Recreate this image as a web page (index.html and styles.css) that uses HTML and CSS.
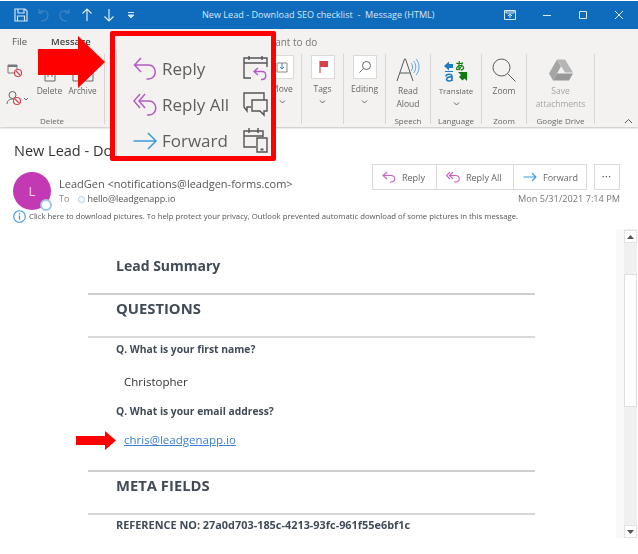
FILE: index.html
```html
<!DOCTYPE html>
<html lang="en">
<head>
<meta charset="utf-8">
<title>New Lead - Download SEO checklist - Message (HTML)</title>
<link rel="stylesheet" href="styles.css">
</head>
<body>
<div class="shot">
  <header class="titlebar">
    <div class="qat">
      <svg class="qi" width="14" height="14" viewBox="0 0 14 14"><path d="M1 1h10l2 2v10H1zM4 1v4h6V1M3.500 13V8h7v5" fill="none" stroke="#cfe3f5" stroke-width="1.200"/></svg>
      <svg class="qi" width="14" height="14" viewBox="0 0 14 14"><path d="M3 1v4h4M3 5c2-3 9-3 9 2s-4 6-7 6" fill="none" stroke="#3f86c8" stroke-width="1.200"/></svg>
      <svg class="qi" width="14" height="14" viewBox="0 0 14 14"><path d="M11 1v4H7M11 5C9 2 2 2 2 7s4 6 7 6" fill="none" stroke="#3f86c8" stroke-width="1.200"/></svg>
      <svg class="qi" width="14" height="14" viewBox="0 0 14 14"><path d="M7 13V1M2.500 5.500L7 1l4.500 4.500" fill="none" stroke="#dbe9f6" stroke-width="1.200"/></svg>
      <svg class="qi" width="14" height="14" viewBox="0 0 14 14"><path d="M7 1v12M2.500 8.500L7 13l4.500-4.500" fill="none" stroke="#dbe9f6" stroke-width="1.200"/></svg>
      <svg class="qi" width="14" height="14" viewBox="0 0 14 14"><path d="M4 4.500h6M4 7l3 3 3-3z" fill="#cfe3f5" stroke="#cfe3f5"/></svg>
    </div>
    <div class="wintitle">New Lead - Download SEO checklist  -  Message (HTML)</div>
    <div class="winctl">
      <svg width="12" height="10" viewBox="0 0 12 10"><path d="M.5.500h11v9H.5z" fill="none" stroke="#dbe9f6"/><path d="M2 1h8v2H2zM6 8V4M4 6l2-2 2 2" fill="none" stroke="#dbe9f6"/></svg>
      <svg width="10" height="10" viewBox="0 0 10 10"><path d="M1 5.500h8" stroke="#dbe9f6"/></svg>
      <svg width="10" height="10" viewBox="0 0 10 10"><path d="M1.500 1.500h7v7h-7z" fill="none" stroke="#dbe9f6"/></svg>
      <svg width="10" height="10" viewBox="0 0 10 10"><path d="M1 1l8 8M9 1L1 9" stroke="#dbe9f6"/></svg>
    </div>
  </header>

  <section class="ribbon">
    <nav class="tabs">
      <span class="tab tab-file">File</span>
      <span class="tab tab-msg">Message</span>
      <span class="tab tab-tell">Tell me what you want to do</span>
    </nav>
    <div class="groups">
      <div class="group g-delete">
        <div class="g-body">
          <div class="mini">
            <svg width="20" height="16" viewBox="0 0 20 16"><path d="M2 3h9v8H2z" fill="none" stroke="#777"/><path d="M2 3h9v2H2z" fill="#777"/><circle cx="12" cy="11" r="3.500" fill="#fff" stroke="#d8414c" stroke-width="1.200"/><path d="M10 9l4 4" stroke="#d8414c" stroke-width="1.200"/></svg>
            <svg width="24" height="16" viewBox="0 0 24 16"><circle cx="6.500" cy="5" r="3.500" fill="none" stroke="#666"/><path d="M1 14c0-3 2-5 6-5" fill="none" stroke="#666"/><circle cx="11" cy="11" r="3.500" fill="#fff" stroke="#d8414c" stroke-width="1.200"/><path d="M9 9l4 4" stroke="#d8414c" stroke-width="1.200"/><path d="M18 8l2 2 2-2" fill="none" stroke="#666"/></svg>
          </div>
          <div class="stack s-del">
            <svg width="16" height="22" viewBox="0 0 16 22"><path d="M1 4h14M3 4v17h10V4M6 9v8M10 9v8" fill="none" stroke="#666"/></svg>
            <span class="btn-sm">Delete</span>
          </div>
          <div class="stack s-arc">
            <svg width="22" height="22" viewBox="0 0 22 22"><path d="M1 4h20v17H1z" fill="none" stroke="#666"/></svg>
            <span class="btn-sm">Archive</span>
          </div>
        </div>
        <div class="g-label">Delete</div>
      </div>
      <div class="group g-hidden"></div>
      <div class="group g-move">
        <div class="g-body col">
          <span class="boxed"><svg width="12" height="12" viewBox="0 0 12 12"><path d="M1 2h10v9H1z" fill="none" stroke="#888"/><path d="M6 2v6M4 6l2 2 2-2" fill="none" stroke="#2f86d1"/></svg></span>
          <span class="btn-sm">Move</span>
          <svg class="caret" width="7" height="4" viewBox="0 0 7 4"><path d="M1 .500l2.500 2.500L6 .500" fill="none" stroke="#666"/></svg>
        </div>
        <div class="g-label"></div>
      </div>
      <div class="group g-tags">
        <div class="g-body col">
          <span class="boxed"><svg width="12" height="14" viewBox="0 0 12 14"><path d="M3 1v12" stroke="#b33"/><path d="M3 1h8v6H3z" fill="#d8414c"/></svg></span>
          <span class="btn-sm">Tags</span>
          <svg class="caret" width="7" height="4" viewBox="0 0 7 4"><path d="M1 .500l2.500 2.500L6 .500" fill="none" stroke="#666"/></svg>
        </div>
        <div class="g-label"></div>
      </div>
      <div class="group g-edit">
        <div class="g-body col">
          <span class="boxed"><svg width="14" height="14" viewBox="0 0 14 14"><circle cx="8.500" cy="5.500" r="4" fill="none" stroke="#666"/><path d="M5.500 8.500L1.500 12.500" stroke="#666"/></svg></span>
          <span class="btn-sm">Editing</span>
          <svg class="caret" width="7" height="4" viewBox="0 0 7 4"><path d="M1 .500l2.500 2.500L6 .500" fill="none" stroke="#666"/></svg>
        </div>
        <div class="g-label"></div>
      </div>
      <div class="group g-speech">
        <div class="g-body col tall">
          <svg width="24" height="24" viewBox="0 0 24 24"><path d="M1 23L8.500 1h1L17 23M4 15h10" fill="none" stroke="#5a5a5a"/><path d="M15 5c2 2 2 6 0 8M17.500 3c3 3 3 9 0 12M20 1c4 4 4 12 0 16" fill="none" stroke="#5aa7e0"/></svg>
          <span class="btn-sm">Read<br>Aloud</span>
        </div>
        <div class="g-label">Speech</div>
      </div>
      <div class="group g-lang">
        <div class="g-body col tall">
          <svg width="24" height="24" viewBox="0 0 24 24"><path d="M0 8l5-4.500V6h4v4H5v2.500z" fill="#1f7ac4"/><text x="11" y="12" class="jp">あ</text><path d="M1 13.500h8" stroke="#1f7ac4"/><path d="M8 23v-4.500c0-3-6-3-6 0M8 19c-6-1-7 4-3 4 2 0 3-1 3-2" fill="none" stroke="#1f7ac4" stroke-width="1.600"/><path d="M14 14h9v9l-2.500-2.500-2 2-3.500-3.500 2-2z" fill="#107c10"/></svg>
          <span class="btn-sm t-lang">Translate</span>
          <svg class="caret" width="7" height="4" viewBox="0 0 7 4"><path d="M1 .500l2.500 2.500L6 .500" fill="none" stroke="#666"/></svg>
        </div>
        <div class="g-label">Language</div>
      </div>
      <div class="group g-zoom">
        <div class="g-body col tall">
          <svg width="24" height="24" viewBox="0 0 24 24"><circle cx="9.500" cy="9.500" r="8.500" fill="none" stroke="#5a5a5a"/><path d="M15.500 15.500L23.500 23.500" stroke="#5a5a5a"/></svg>
          <span class="btn-sm">Zoom</span>
        </div>
        <div class="g-label">Zoom</div>
      </div>
      <div class="group g-drive">
        <div class="g-body col tall">
          <svg width="24" height="24" viewBox="0 0 24 21"><path d="M8 0h8l8 13h-8z" fill="#b5b5b5"/><path d="M8 0l4 7-8 14-4-7z" fill="#a5a5a5"/><path d="M8 14h16l-4 7H4z" fill="#989898"/></svg>
          <span class="btn-sm faint">Save<br>attachments</span>
        </div>
        <div class="g-label">Google Drive</div>
      </div>
      <div class="g-end">
        <svg width="9" height="6" viewBox="0 0 9 6"><path d="M1 5l3.500-3.500L8 5" fill="none" stroke="#555"/></svg>
      </div>
    </div>
  </section>

  <section class="msghead">
    <h1 class="subject">New Lead - Download SEO checklist</h1>
    <div class="sender-row">
      <div class="avatar">L<span class="presence"></span></div>
      <div class="who">
        <div class="from">LeadGen &lt;notifications@leadgen-forms.com&gt;</div>
        <div class="to"><span class="to-l">To</span><span class="dot"></span>hello@leadgenapp.io</div>
      </div>
      <div class="actions">
        <div class="btns">
          <div class="btngroup">
            <span class="abtn a-reply"><svg width="14" height="12" viewBox="0 0 14 12"><path d="M5 1L1 4.500 5 8M1 4.500h8c5 0 5 6.500 0 6.500H8" fill="none" stroke="#c75fc8" stroke-width="1.100"/></svg>Reply</span>
            <span class="abtn a-all"><svg width="14" height="12" viewBox="0 0 14 12"><path d="M4 1L.500 4.500 4 8M7 1L3.500 4.500 7 8M3.500 4.500h6c5 0 5 6.500 0 6.500H8" fill="none" stroke="#c75fc8" stroke-width="1.100"/></svg>Reply All</span>
            <span class="abtn a-fwd"><svg width="14" height="10" viewBox="0 0 14 10"><path d="M.5 5h12M9 1l4 4-4 4" fill="none" stroke="#3a9ad9" stroke-width="1.100"/></svg>Forward</span>
          </div>
          <span class="more">•••</span>
        </div>
        <div class="date">Mon 5/31/2021 7:14 PM</div>
      </div>
    </div>
    <div class="infobar">
      <svg width="13" height="13" viewBox="0 0 13 13"><circle cx="6.500" cy="6.500" r="5.800" fill="#fff" stroke="#3a9ad9" stroke-width="1.100"/><path d="M6.500 5.500v4M6.500 3v1.400" stroke="#3a9ad9" stroke-width="1.300"/></svg>
      <span>Click here to download pictures. To help protect your privacy, Outlook prevented automatic download of some pictures in this message.</span>
    </div>
  </section>

  <section class="viewer">
    <div class="mail">
      <h2 class="lead">Lead Summary</h2>
      <h2 class="sect s-q">QUESTIONS</h2>
      <p class="q q1">Q. What is your first name?</p>
      <p class="a a1">Christopher</p>
      <p class="q q2">Q. What is your email address?</p>
      <p class="a a2"><a href="#">chris@leadgenapp.io</a></p>
      <h2 class="sect s-m">META FIELDS</h2>
      <p class="q ref">REFERENCE NO: 27a0d703-185c-4213-93fc-961f55e6bf1c</p>
    </div>
    <div class="scroll">
      <span class="sbtn"><svg width="7" height="4" viewBox="0 0 7 4"><path d="M0 4l3.500-4L7 4z" fill="#555"/></svg></span>
      <span class="thumb"></span>
      <span class="sbtn sdown"><svg width="7" height="4" viewBox="0 0 7 4"><path d="M0 0l3.500 4L7 0z" fill="#555"/></svg></span>
    </div>
  </section>

  <div class="callout">
    <div class="callout-rows">
      <div class="c-row"><svg width="26" height="24" viewBox="0 0 26 24"><path d="M8 1L1.500 8 8 15M1.500 8h14c9 0 9 14 0 14h-2" fill="none" stroke="#b45cc4" stroke-width="1.500"/></svg><span class="c-text">Reply</span></div>
      <div class="c-row"><svg width="26" height="24" viewBox="0 0 26 24"><path d="M7 1L1 8l6 7M12 1L6 8l6 7M6 8h10c9 0 9 14 0 14h-2" fill="none" stroke="#b45cc4" stroke-width="1.500"/></svg><span class="c-text">Reply All</span></div>
      <div class="c-row"><svg width="26" height="18" viewBox="0 0 26 18"><path d="M.5 9h22M15 1l8 8-8 8" fill="none" stroke="#3a9ad9" stroke-width="1.500"/></svg><span class="c-text">Forward</span></div>
    </div>
    <div class="callout-icons">
      <svg width="25" height="25" viewBox="0 0 25 25"><path d="M8 22H1V2h23v9M1 7h23M6 0v4M19 0v4" fill="none" stroke="#555" stroke-width="1.400"/><path d="M15 12l-4 3.500 4 3.500M11 15.500h8c5 0 5 8 0 8h-1" fill="none" stroke="#b45cc4" stroke-width="1.400"/></svg>
      <svg width="25" height="25" viewBox="0 0 25 25"><path d="M8 15H4v4l-3-4V1h20v7" fill="none" stroke="#555" stroke-width="1.400"/><path d="M9 8h15v11h-3v4l-4-4H9z" fill="#f3f2f1" stroke="#555" stroke-width="1.400"/></svg>
      <svg width="25" height="25" viewBox="0 0 25 25"><path d="M13 19H1V3h19v6M1 8h19M6 0v5M15 0v5" fill="none" stroke="#555" stroke-width="1.400"/><path d="M14 10h10v14H14z" fill="#f3f2f1" stroke="#555" stroke-width="1.400"/><path d="M17.500 20.500h3v2h-3z" fill="#555"/></svg>
    </div>
  </div>

  <svg class="arrow-big" width="67" height="52" viewBox="0 0 67 52"><path d="M0 13h40V0l27 26-27 26V39H0z" fill="#fe0000"/></svg>
  <svg class="arrow-small" width="40" height="19" viewBox="0 0 40 19"><path d="M0 5h29V0l11 9.500L29 19v-5H0z" fill="#fe0000"/></svg>
</div>
</body>
</html>
```
FILE: styles.css
```css
* { box-sizing: border-box; margin: 0; padding: 0; }
html, body { width: 638px; height: 554px; overflow: hidden; background: #fff; }
body { font-family: "Open Sans", "Noto Sans", sans-serif; color: #444; }
.shot { position: relative; width: 638px; height: 554px; padding-top: 1px; filter: blur(0.45px); }

.titlebar { height: 28px; background: #0f6cbd; display: flex; align-items: center; position: relative; }
.qat { display: flex; align-items: center; gap: 8px; padding-left: 14px; }
.wintitle { position: absolute; left: 202px; top: 8px; font-size: 9.1px; line-height: 12px; color: #d6e6f5; white-space: pre; }
.winctl { margin-left: auto; display: flex; align-items: center; gap: 26px; padding-right: 14px; }

.ribbon { height: 98px; background: #f3f2f1; box-shadow: 0 1px 2px rgba(0,0,0,.25); position: relative; }
.tabs { display: flex; height: 25px; align-items: center; font-size: 9.5px; color: #555; padding-left: 12px; }
.tab-msg { margin-left: 24px; font-weight: 600; color: #444; }
.tab-tell { margin-left: 95px; color: #777; font-size: 10px; }

.groups { display: flex; height: 70px; }
.group { display: flex; flex-direction: column; border-right: 1px solid #d8d6d4; flex: none; }
.g-body { flex: 1; position: relative; display: flex; font-size: 8.5px; color: #666; }
.g-body.col { flex-direction: column; align-items: center; padding-top: 1px; }
.g-body.tall { padding-top: 4px; }
.g-label { height: 9px; font-size: 8px; line-height: 12px; color: #666; text-align: center; white-space: nowrap; }
.g-delete { width: 105px; }
.g-hidden { width: 166px; }
.g-move { width: 31px; padding-right: 8px; border-right-width: 1px; }
.g-tags { width: 42px; }
.g-edit { width: 42px; }
.g-speech { width: 45px; }
.g-lang { width: 51px; }
.g-zoom { width: 45px; }
.g-drive { width: 68px; }
.g-end { flex: 1; display: flex; align-items: flex-end; justify-content: flex-end; padding: 0 5px 0 0; }

.mini { display: flex; flex-direction: column; gap: 12px; padding: 8px 0 0 6px; width: 36px; flex: none; }
.stack { display: flex; flex-direction: column; align-items: center; padding-top: 6px; flex: none; }
.stack svg { margin-bottom: 2px; }
.s-del { width: 27px; }
.s-arc { width: 33px; margin-left: 3px; }
.s-arc .btn-sm { font-size: 8.2px; }
.btn-sm { display: block; text-align: center; line-height: 13px; white-space: nowrap; }
.boxed { width: 24px; height: 24px; background: #fff; border: 1px solid #dcdad8; display: flex; align-items: center; justify-content: center; margin-bottom: 3px; flex: none; }
.faint { color: #a6a6a6; }
.caret { margin-top: 5px; }
.tall .btn-sm { margin-top: 2px; }
.t-lang { font-size: 8px; }
.jp { font-family: "Noto Sans CJK JP", sans-serif; font-size: 10px; fill: #107c10; font-weight: 700; }

.msghead { height: 102px; padding: 14px 18px 0 13px; position: relative; }
.subject { font-size: 14.5px; font-weight: 400; line-height: 20px; color: #333; padding-left: 1px; white-space: nowrap; }
.sender-row { display: flex; margin-top: 3px; }
.avatar { width: 38px; height: 38px; margin-top: 8px; border-radius: 50%; background: #c239b3; color: #f4cdef; font-size: 13px; display: flex; align-items: center; justify-content: center; position: relative; flex: none; }
.presence { position: absolute; right: -1px; bottom: -1px; width: 12px; height: 12px; border-radius: 50%; background: #fff; border: 2px solid #9cc9e6; }
.who { margin-left: 8px; padding-top: 13px; }
.from { font-size: 11px; line-height: 14px; color: #555; white-space: nowrap; }
.to { font-size: 9px; line-height: 14px; margin-top: 1px; color: #555; display: flex; align-items: center; }
.to-l { color: #888; margin-right: 9px; }
.dot { width: 7px; height: 7px; border: 1px solid #aac8de; border-radius: 50%; margin-right: 2px; }
.actions { margin-left: auto; display: flex; flex-direction: column; align-items: flex-end; }
.btns { display: flex; gap: 7px; }
.btngroup { display: flex; height: 26px; border: 1px solid #dcdad8; background: #fff; }
.abtn { display: flex; align-items: center; gap: 6px; padding-left: 9px; font-size: 9px; color: #666; border-right: 1px solid #dcdad8; white-space: nowrap; }
.abtn:last-child { border-right: 0; }
.a-reply { width: 64px; }
.a-all { width: 77px; }
.a-fwd { width: 72px; }
.more { width: 26px; height: 26px; border: 1px solid #dcdad8; font-size: 6px; letter-spacing: 1px; line-height: 24px; text-align: center; color: #444; }
.date { font-size: 9.2px; line-height: 12px; color: #777; margin-top: 3px; white-space: nowrap; }
.infobar { display: flex; align-items: center; gap: 3px; position: absolute; left: 13px; top: 83px; font-size: 7.75px; line-height: 13px; color: #555; white-space: nowrap; }

.viewer { position: relative; height: 310px; display: flex; }
.mail { flex: 1; position: relative; padding: 0 0 0 88px; width: 616px; }
.mail > * { width: 447px; padding-left: 28px; white-space: nowrap; color: #414b57; }
.lead { font-size: 14px; font-weight: 700; line-height: 20px; margin-top: 27px; height: 37px; }
.sect { font-size: 14.8px; font-weight: 700; line-height: 20px; border-top: 2px solid #cfcfcf; height: 43px; padding-top: 3px; }
.q { font-size: 10.3px; font-weight: 700; line-height: 14px; }
.q1 { border-top: 2px solid #dadada; padding-top: 4px; height: 38px; }
.a { font-size: 11.5px; font-weight: 400; line-height: 16px; padding-left: 36px; }
.a1 { height: 30px; color: #333; }
.q2 { height: 28px; }
.a2 { height: 38px; }
.a2 a { color: #3a7fd1; }
.s-m { padding-top: 3px; }
.ref { border-top: 2px solid #d6d6d6; padding-top: 3px; font-size: 10.9px; }

.scroll { position: absolute; left: 616px; top: 0; width: 22px; height: 309px; background: linear-gradient(90deg, #f9f9fb 0 8px, #f0f0f0 8px 21px, #fff 21px); }
.sbtn { position: absolute; left: 8px; top: 1px; width: 13px; height: 13px; background: #fff; border: 1px solid #e2e2e2; display: flex; align-items: center; justify-content: center; }
.sdown { top: auto; bottom: 0; }
.thumb { position: absolute; left: 8px; top: 45px; width: 13px; height: 133px; background: #fff; border: 1px solid #dedede; }

.callout { position: absolute; left: 110px; top: 31px; width: 166px; height: 130px; background: #f3f2f1; border: 5px solid #fe0000; border-radius: 2px; display: flex; padding: 15px 6px 0 18px; }
.callout::before { content: ""; position: absolute; left: 1px; top: 14px; bottom: 0; width: 1px; background: #d4d2d0; }
.callout-rows { display: flex; flex-direction: column; width: 110px; flex: none; }
.c-row { display: flex; align-items: center; height: 36px; flex: none; gap: 3px; color: #605e5c; }
.c-row svg { flex: none; width: 26px; }
.c-text { font-size: 17px; line-height: 24px; white-space: nowrap; }
.callout-icons { display: flex; flex-direction: column; gap: 11px; padding-top: 5px; }

.arrow-big { position: absolute; left: 38px; top: 36px; }
.arrow-small { position: absolute; left: 76px; top: 431px; }
```
